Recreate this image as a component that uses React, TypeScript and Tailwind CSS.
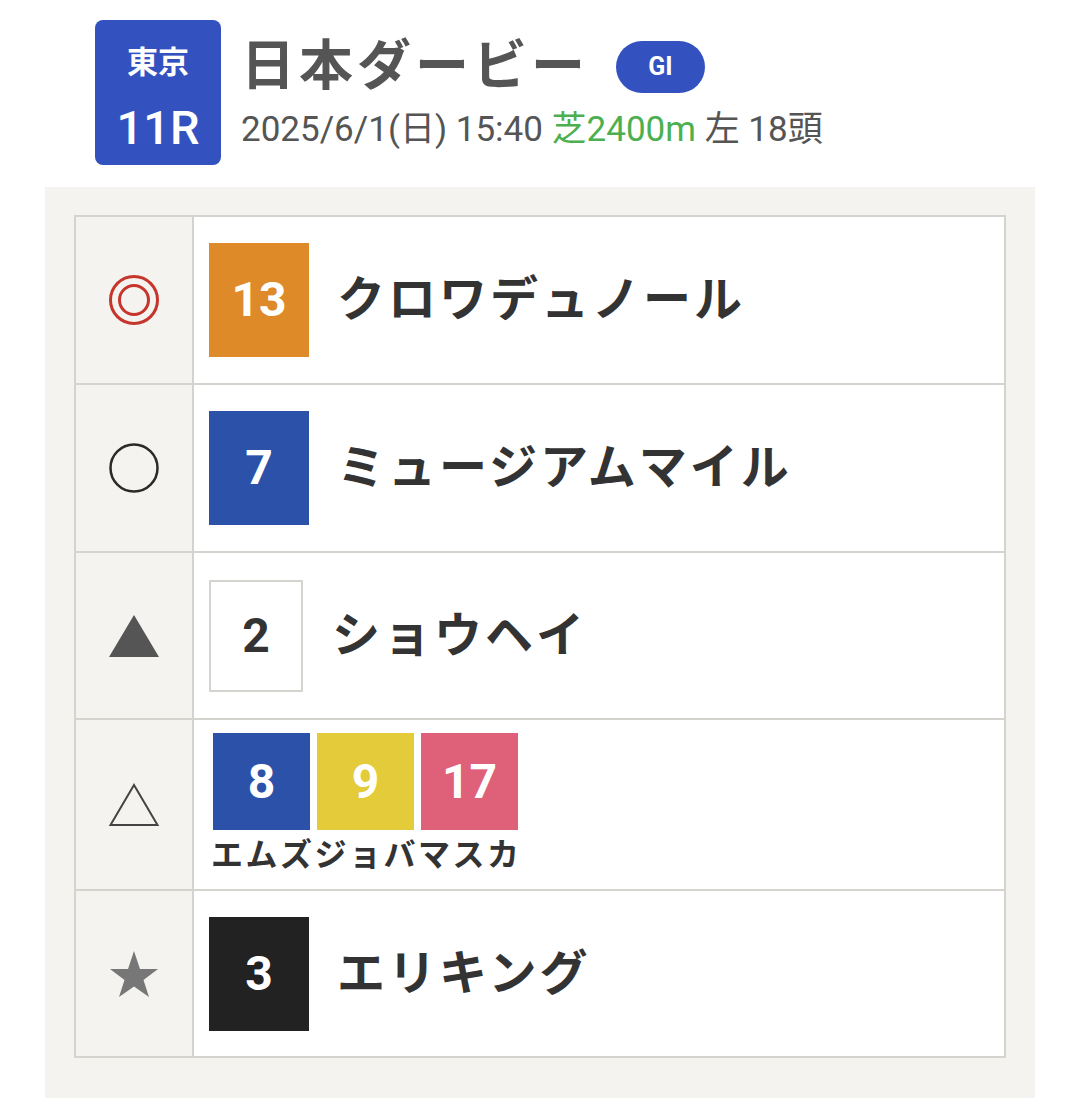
const font = { fontFamily: 'Roboto, "Noto Sans CJK JP", sans-serif' };

type Horse = { num: number; bg: string; text: string; border?: boolean };

function NumBox({ h, size = 'lg' }: { h: Horse; size?: 'lg' | 'sm' }) {
  let dims = size === 'lg' ? 'w-[100px] h-[114px]' : 'w-[97px] h-[97px]';
  if (h.border) dims = 'w-[94px] h-[112px] border-2 border-[#d5d3cd]';
  return (
    <div className={`${dims} flex shrink-0 items-center justify-center text-[48px] font-bold leading-none ${h.bg} ${h.text}`}>
      {h.num}
    </div>
  );
}

function Mark({ kind }: { kind: string }) {
  if (kind === 'double')
    return (
      <svg width="52" height="52" viewBox="0 0 52 52">
        <circle cx="26" cy="26" r="23.5" fill="none" stroke="#c6352b" strokeWidth="3" />
        <circle cx="26" cy="26" r="14.5" fill="none" stroke="#c6352b" strokeWidth="3" />
      </svg>
    );
  if (kind === 'circle')
    return (
      <svg width="52" height="52" viewBox="0 0 52 52">
        <circle cx="26" cy="26" r="23.5" fill="none" stroke="#2a2a2a" strokeWidth="2.5" />
      </svg>
    );
  if (kind === 'tri')
    return (
      <svg width="52" height="46" viewBox="0 0 52 46">
        <polygon points="26,2 51,44 1,44" fill="#555" />
      </svg>
    );
  if (kind === 'otri')
    return (
      <svg width="52" height="46" viewBox="0 0 52 46">
        <polygon points="26,3 49.5,43 2.5,43" fill="none" stroke="#444" strokeWidth="2" />
      </svg>
    );
  return (
    <svg width="50" height="48" viewBox="0 0 50 48">
      <polygon
        points="25,1 31,19 49,19 34.5,30 40,47 25,36.5 10,47 15.5,30 1,19 19,19"
        fill="#777"
      />
    </svg>
  );
}

const rows = [
  { mark: 'double', horses: [{ num: 13, bg: 'bg-[#de8a28]', text: 'text-white' }], name: 'クロワデュノール', h: 'h-[166px]' },
  { mark: 'circle', horses: [{ num: 7, bg: 'bg-[#2b52a8]', text: 'text-white' }], name: 'ミュージアムマイル', h: 'h-[168px]' },
  { mark: 'tri', horses: [{ num: 2, bg: 'bg-white', text: 'text-[#333]', border: true }], name: 'ショウヘイ', h: 'h-[167px]' },
  {
    mark: 'otri',
    horses: [
      { num: 8, bg: 'bg-[#2b52a8]', text: 'text-white' },
      { num: 9, bg: 'bg-[#e3cb3a]', text: 'text-white' },
      { num: 17, bg: 'bg-[#de6079]', text: 'text-white' },
    ],
    name: 'エムズジョバマスカ',
    h: 'h-[171px]',
  },
  { mark: 'star', horses: [{ num: 3, bg: 'bg-[#222]', text: 'text-white' }], name: 'エリキング', h: 'h-[167px]' },
];

export default function App() {
  return (
    <div className="min-h-[1098px] w-[1080px] bg-white text-[#333]" style={font}>
      {/* header */}
      <div className="flex items-start pt-[20px] pl-[95px]">
        <div className="flex h-[145px] w-[126px] flex-col items-center justify-center rounded-[8px] bg-[#3352c0] text-white">
          <div className="mt-[12px] text-[31px] font-bold leading-none">東京</div>
          <div className="mt-[26px] text-[47px] font-medium leading-none">11R</div>
        </div>
        <div className="ml-[20px] flex flex-col">
          <div className="flex items-center">
            <div className="mt-[20px] text-[54px] font-bold leading-none tracking-[4px] text-[#555]">日本ダービー</div>
            <div className="ml-[27px] mt-[20px] flex h-[52px] w-[89px] items-center justify-center rounded-full bg-[#3352c0] text-[25px] font-bold text-white">
              GI
            </div>
          </div>
          <div className="mt-[18px] text-[35px] leading-none text-[#555]">
            2025/6/1(日) 15:40 <span className="text-[#4caf50]">芝2400m</span> 左 18頭
          </div>
        </div>
      </div>

      {/* panel */}
      <div className="mx-[45px] mt-[22px] bg-[#f4f3ef] px-[29px] pt-[28px] pb-[42px]">
        <div className="border-2 border-[#d5d3cd] bg-white">
          {rows.map((r, i) => (
            <div key={i} className={`flex ${r.h} ${i > 0 ? 'border-t-2 border-[#d5d3cd]' : ''}`}>
              <div className="flex w-[118px] shrink-0 items-center justify-center border-r-2 border-[#d5d3cd] bg-[#f4f3ef]">
                <Mark kind={r.mark} />
              </div>
              {r.horses.length > 1 ? (
                <div className="flex flex-col pt-[13px] pl-[19px]">
                  <div className="flex gap-[7px]">
                    {r.horses.map((h) => (
                      <NumBox key={h.num} h={h} size="sm" />
                    ))}
                  </div>
                  <div className="mt-[9px] -ml-[2px] text-[32px] font-bold leading-none tracking-[2.5px] text-[#333]">{r.name}</div>
                </div>
              ) : (
                <div className="flex items-center pl-[15px]">
                  <NumBox h={r.horses[0]} />
                  <div className={`${r.horses[0].border ? 'ml-[29px]' : 'ml-[28px]'} text-[48px] font-bold leading-none tracking-[3px] text-[#333]`}>
                    {r.name}
                  </div>
                </div>
              )}
            </div>
          ))}
        </div>
      </div>
    </div>
  );
}
